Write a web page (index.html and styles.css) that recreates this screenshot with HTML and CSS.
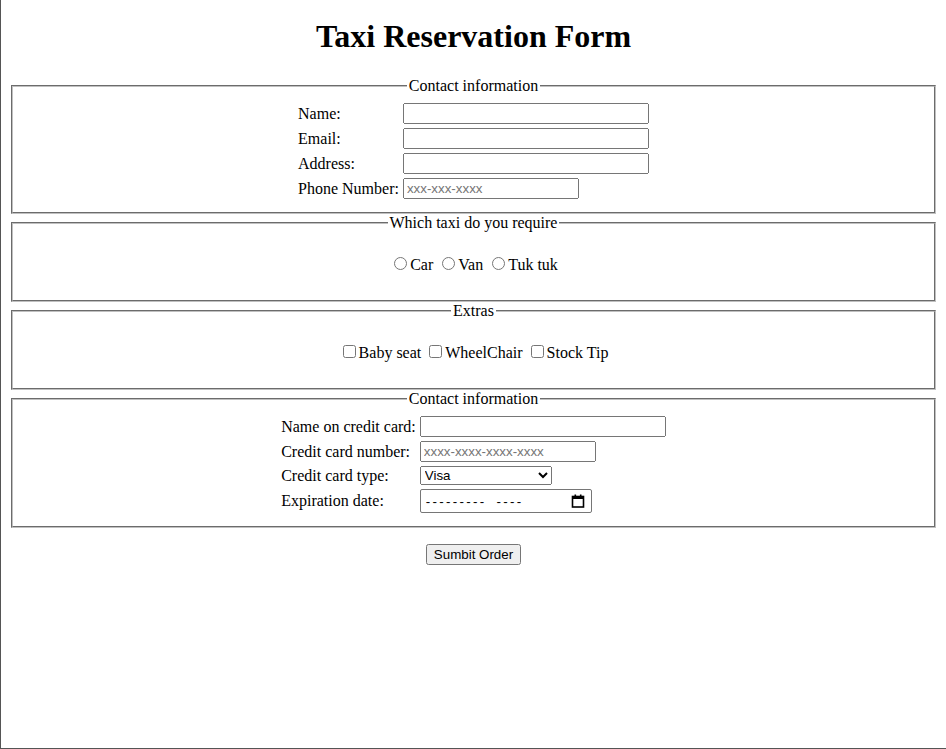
FILE: index.html
```html
<!DOCTYPE html>
<html lang="en">
<head>
<meta charset="utf-8">
<title>Taxi Reservation Form</title>
<link rel="stylesheet" href="styles.css">
</head>
<body>
<h1 class="title">Taxi Reservation Form</h1>
<form class="form">
  <fieldset class="group">
    <legend class="group-legend">Contact information</legend>
    <table class="fields">
      <tr><td><label for="name">Name:</label></td><td><input id="name" class="field wide" type="text"></td></tr>
      <tr><td><label for="email">Email:</label></td><td><input id="email" class="field wide" type="email"></td></tr>
      <tr><td><label for="address">Address:</label></td><td><input id="address" class="field wide" type="text"></td></tr>
      <tr><td><label for="phone">Phone Number:</label></td><td><input id="phone" class="field narrow" type="tel" placeholder="xxx-xxx-xxxx"></td></tr>
    </table>
  </fieldset>
  <fieldset class="group">
    <legend class="group-legend">Which taxi do you require</legend>
    <p class="choices"><input type="radio" name="taxi" id="car"><label for="car">Car</label> <input type="radio" name="taxi" id="van"><label for="van">Van</label> <input type="radio" name="taxi" id="tuk"><label for="tuk">Tuk tuk</label></p>
  </fieldset>
  <fieldset class="group">
    <legend class="group-legend">Extras</legend>
    <p class="choices"><input type="checkbox" id="baby"><label for="baby">Baby seat</label> <input type="checkbox" id="wheel"><label for="wheel">WheelChair</label> <input type="checkbox" id="tip"><label for="tip">Stock Tip</label></p>
  </fieldset>
  <fieldset class="group">
    <legend class="group-legend">Contact information</legend>
    <table class="fields">
      <tr><td><label for="ccname">Name on credit card:</label></td><td><input id="ccname" class="field wide" type="text"></td></tr>
      <tr><td><label for="ccnum">Credit card number:</label></td><td><input id="ccnum" class="field narrow" type="text" placeholder="xxxx-xxxx-xxxx-xxxx"></td></tr>
      <tr><td><label for="cctype">Credit card type:</label></td><td><select id="cctype" class="select"><option>Visa</option><option>MasterCard</option><option>American Express</option></select></td></tr>
      <tr><td><label for="exp">Expiration date:</label></td><td><span class="month-box" id="exp" role="textbox" tabindex="0"><span class="month-text">--------- <span class="month-gap"></span>----</span><svg class="cal-icon" width="14" height="14" viewBox="0 0 14 14" aria-hidden="true"><rect x="1.5" y="2.5" width="11" height="10.5" fill="none" stroke="#000" stroke-width="1.6"/><rect x="1" y="2" width="12" height="3" fill="#000"/><rect x="3.5" y="0.5" width="1.6" height="2" fill="#000"/><rect x="8.9" y="0.5" width="1.6" height="2" fill="#000"/></svg></span></td></tr>
    </table>
  </fieldset>
  <p class="actions"><button type="submit" class="submit">Sumbit Order</button></p>
</form>
</body>
</html>
```
FILE: styles.css
```css
html {
  border-left: 1px solid #555;
  border-bottom: 1px solid #555;
  min-height: 100vh;
  box-sizing: border-box;
}
body {
  margin: 8px;
  font-family: "Liberation Serif", "Times New Roman", serif;
  font-size: 16px;
  color: #000;
}
.title {
  text-align: center;
  font-size: 32px;
  font-weight: bold;
  margin-top: 10.44px;
}
.group {
  text-align: center;
  border: 2px groove #c0c0c0;
}
.group-legend {
  margin: 0 auto;
}
.fields {
  margin: 0 auto;
  text-align: left;
}
.field,
.select,
.submit,
.month-box {
  font-family: "Liberation Sans", Arial, sans-serif;
  font-size: 13.333px;
}
.wide {
  width: 246px;
  box-sizing: border-box;
}
.narrow {
  width: 176px;
  box-sizing: border-box;
}
.select {
  width: 132px;
}
.month-box {
  display: inline-flex;
  align-items: center;
  justify-content: space-between;
  box-sizing: border-box;
  width: 172px;
  height: 24px;
  padding: 0 6px 0 5px;
  border: 1px solid #767676;
  border-radius: 2px;
  background: #fff;
  vertical-align: middle;
}
.month-text {
  letter-spacing: 2.3px;
  white-space: pre;
}
.month-gap {
  display: inline-block;
  width: 4px;
}
.cal-icon {
  display: block;
}
.actions {
  text-align: center;
}
```
